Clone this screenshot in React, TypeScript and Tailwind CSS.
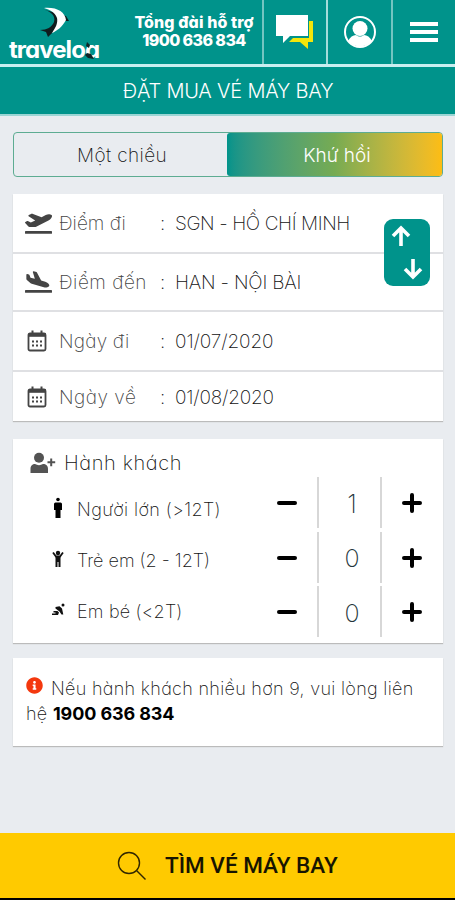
import type { ReactNode } from 'react';
import { FaInfoCircle, FaPlaneArrival, FaPlaneDeparture } from 'react-icons/fa';

function Logo() {
  return (
    <div className="relative h-[64px] w-[126px] shrink-0">
      <svg className="absolute left-[40px] top-[7px] h-[30px] w-[32px]" viewBox="0 0 32 30">
        <path d="M2 2C11 4 16 9 14 15C12 20 7 23 0 23L6 25L8 30L13 25C19 22 23 17 24 14L29 14L26 9Z" fill="#101c1d" />
        <path d="M4 1C17 0 25 5 26 13C22 20 17 24 12 26C16 20 18 16 17 11C15 5 10 3 4 1Z" fill="#fff" />
      </svg>
      <div className="absolute left-[9px] top-[37px] text-[24px] font-bold leading-[26px] tracking-[-0.95px] text-white">
        traveloa
      </div>
      <svg className="absolute left-[83px] top-[41px] h-[19px] w-[18px]" viewBox="0 0 18 19">
        <path d="M4 1L7 4L6 7L3 5ZM4 12L8 13L11 18L5 17L2 14Z" fill="#112526" />
      </svg>
    </div>
  );
}

function ChatIcon() {
  return (
    <svg className="h-[36px] w-[40px]" viewBox="0 0 40 36">
      <path d="M34 7H38V28H33V35L25 28H14L18 24H34Z" fill="#f5e60b" />
      <path d="M1 1H33V22H15L8 29V22H1Z" fill="#fff" />
    </svg>
  );
}

function UserIcon() {
  return (
    <svg className="h-[34px] w-[34px]" viewBox="0 0 34 34">
      <circle cx="17" cy="17" r="15" fill="none" stroke="#fff" strokeWidth="2" />
      <circle cx="17" cy="13.5" r="7.5" fill="#fff" />
      <path d="M5 26C7 22 10 20 13 20C16 22 18 22 21 20C24 20 27 22 29 26C23 33 11 33 5 26Z" fill="#fff" />
    </svg>
  );
}

function CalendarIcon() {
  return (
    <svg className="ml-[2px] h-[22px] w-[20px]" viewBox="0 0 20 22" fill="none" stroke="#444" strokeWidth="1.8">
      <rect x="1.5" y="3.5" width="17" height="17" rx="1.5" />
      <path d="M1.5 5H18.5" strokeWidth="3.6" />
      <path d="M5.5 0.5V5M14.5 0.5V5" strokeWidth="2" />
      <path d="M5 11.5H15M5 15.5H15" strokeWidth="2" strokeDasharray="2 2" />
    </svg>
  );
}

function PassengersIcon() {
  return (
    <svg className="h-[22px] w-[26px]" viewBox="0 0 26 22" fill="#535353">
      <circle cx="9" cy="5.7" r="5" />
      <path d="M0.5 21V17C0.5 13.5 2.5 12 5 12C7.5 13.5 10.5 13.5 13 12C16 12 18 13.5 18 17V21Z" />
      <path d="M20.2 6.5H22.2V9.3H25.2V11.3H22.2V14.2H20.2V11.3H17.5V9.3H20.2Z" />
    </svg>
  );
}

function AdultIcon() {
  return (
    <svg className="h-[22px] w-[14px]" viewBox="0 0 14 22" fill="#000">
      <circle cx="7" cy="2.5" r="1.8" />
      <path d="M4.5 5.5H9.5Q11 5.5 11 7V13H9.5V21H4.5V13H3V7Q3 5.5 4.5 5.5Z" />
    </svg>
  );
}

function ChildIcon() {
  return (
    <svg className="h-[18px] w-[14px]" viewBox="0 0 14 18" fill="none" stroke="#111">
      <circle cx="7" cy="3" r="2.2" fill="#111" stroke="none" />
      <path d="M2 2.5L5 6.5H9L12 2.5" strokeWidth="1.8" />
      <path d="M4.5 6H9.5V17H7.5V12H6.5V17H4.5Z" fill="#111" stroke="none" />
    </svg>
  );
}

function BabyIcon() {
  return (
    <svg className="h-[14px] w-[14px]" viewBox="0 0 14 14" fill="#111">
      <circle cx="12" cy="2" r="1.5" />
      <path d="M4.5 4L8.5 3.2L11 5.5L12.3 11.5L10.5 11.5L8.5 8.5L4.5 5.5Z" />
      <path d="M2.5 8H6.5L8 9.5L7 12H1V10.6H4.5V9.4H2.5Z" />
    </svg>
  );
}

function DetailRow({ icon, label, value, className }: { icon: ReactNode; label: ReactNode; value: ReactNode; className: string }) {
  return (
    <div className={`flex items-center border-[#dfe0e3] pl-3 ${className}`}>
      <div className="flex w-[34px] items-center text-[#444]">{icon}</div>
      <div className="w-[101px] pt-[3px] text-[#444]">{label}</div>
      <div className="w-[15px] pt-[3px]">:</div>
      <div className="whitespace-nowrap pt-[3px]">{value}</div>
    </div>
  );
}

function StepIcon({ plus }: { plus?: boolean }) {
  return (
    <svg className="h-[22px] w-[22px]" viewBox="0 0 22 22" fill="none" stroke="#000" strokeWidth="4" strokeLinecap="round">
      <path d={plus ? 'M3 11H19M11 3V19' : 'M3 11H19'} />
    </svg>
  );
}

function Stepper({ count }: { count: number }) {
  return (
    <div className="flex h-[54.5px] items-start">
      <div className="flex h-[52px] w-[60px] items-center justify-center">
        <StepIcon />
      </div>
      <div className="flex h-[51px] w-[65px] items-center justify-center border-x-2 border-[#d7d7d7] pt-1 pl-[5px] text-[25px] text-[#23343b]">
        {count}
      </div>
      <div className="flex h-[52px] w-[61px] items-center justify-center pr-[2px]">
        <StepIcon plus />
      </div>
    </div>
  );
}

function PassengerLabel({ icon, children }: { icon: ReactNode; children: ReactNode }) {
  return (
    <div className="flex h-[51px] items-center whitespace-nowrap text-[18px]">
      <div className="flex w-[26px] pb-1">{icon}</div>
      {children}
    </div>
  );
}

export default function App() {
  return (
    <div className="flex h-[900px] w-[455px] flex-col overflow-hidden bg-[#e9ecf0] font-['Inter','Noto_Sans',sans-serif] text-[19px] font-extralight text-[#111] [font-feature-settings:'cv11']">
      {/* Header */}
      <header className="flex h-[67px] shrink-0 border-b-[3px] border-[#c9eef0] bg-[#00938b]">
        <Logo />
        <div className="w-[136px] pt-[13px] text-center text-[16px] font-extrabold leading-[19px] text-white">
          <div className="whitespace-nowrap tracking-[0.1px]">Tổng đài hỗ trợ</div>
          <div className="-mt-px tracking-[-0.6px]">1900 636 834</div>
        </div>
        <div className="flex w-[64px] items-center justify-center border-l-2 border-[#74c5c1]">
          <ChatIcon />
        </div>
        <div className="flex w-[65px] items-center justify-center border-l-2 border-[#a4dcda]">
          <UserIcon />
        </div>
        <div className="flex flex-1 flex-col items-center justify-center gap-1 border-l-2 border-[#74c5c1]">
          <div className="h-[4px] w-[28px] bg-white" />
          <div className="h-[4px] w-[28px] bg-white" />
          <div className="h-[4px] w-[28px] bg-white" />
        </div>
      </header>
      <h1 className="flex h-[49px] shrink-0 items-center justify-center border-b-2 border-[#9bd5d4] bg-[#00938b] pl-px text-[20px] font-light tracking-[-0.2px] text-white">
        ĐẶT MUA VÉ MÁY BAY
      </h1>

      <main className="flex flex-1 flex-col px-[13px] pt-4 pr-3">
        {/* Trip type */}
        <div className="flex h-[45px] rounded-[4px] border border-[#5dac92]">
          <button className="flex-1 pt-[3px] pl-[3px] tracking-[0.4px]">Một chiều</button>
          <button className="w-[215px] rounded-[3px] bg-linear-to-r from-[#00938b] via-[#76ab52] to-[#fdbd12] pt-[3px] pl-[5px] font-light text-white">
            Khứ hồi
          </button>
        </div>

        {/* Route and dates */}
        <section className="relative mt-[17px] bg-white shadow-[0_1px_1px_#bbb]">
          <DetailRow className="h-[60px] border-b-2" icon={<FaPlaneDeparture className="h-[22px] w-[27px]" />} label="Điểm đi" value={<span className="tracking-[-0.4px]">SGN - HỒ CHÍ MINH</span>} />
          <DetailRow className="h-[58px] border-b-2" icon={<FaPlaneArrival className="h-[22px] w-[27px]" />} label={<span className="tracking-[0.5px]">Điểm đến</span>} value={<span className="tracking-[-0.2px]">HAN - NỘI BÀI</span>} />
          <DetailRow className="h-[60px] border-b-2" icon={<CalendarIcon />} label={<span className="tracking-[0.2px]">Ngày đi</span>} value={<span className="tracking-[-0.1px]">01/07/2020</span>} />
          <DetailRow className="h-[49px]" icon={<CalendarIcon />} label={<span className="tracking-[0.5px]">Ngày về</span>} value={<span className="tracking-[-0.2px]">01/08/2020</span>} />
          <button className="absolute right-[13px] top-[25px] h-[67px] w-[46px] rounded-[9px] bg-[#00938b]">
            <svg className="h-[67px] w-[46px]" viewBox="0 0 46 67" fill="none" stroke="#fff" strokeWidth="3.6">
              <path d="M17 27V10M9 17L17 9L25 17M29 40V57M21 50L29 58L37 50" />
            </svg>
          </button>
        </section>

        {/* Passengers */}
        <section className="mt-[18px] h-[204px] bg-white shadow-[0_1px_1px_#bbb]">
          <div className="flex h-[38px] items-center gap-2 pl-[17px] pt-[10px] text-[20px]">
            <PassengersIcon />
            <span className="tracking-[0.6px]">Hành khách</span>
          </div>
          <div className="flex justify-between">
            <div className="pl-[38px] pt-[7px]">
              <PassengerLabel icon={<AdultIcon />}>
                <span className="tracking-[0.4px]">Người lớn (&gt;12T)</span>
              </PassengerLabel>
              <PassengerLabel icon={<ChildIcon />}>
                <span>Trẻ em (2 - 12T)</span>
              </PassengerLabel>
              <PassengerLabel icon={<BabyIcon />}>
                <span className="tracking-[0.2px]">Em bé (&lt;2T)</span>
              </PassengerLabel>
            </div>
            <div>
              <Stepper count={1} />
              <Stepper count={0} />
              <Stepper count={0} />
            </div>
          </div>
        </section>

        <section className="mt-[15px] h-[88px] bg-white pl-[13px] pt-[18px] text-[18px] leading-[25px] tracking-[0.3px] shadow-[0_1px_1px_#bbb]">
          <FaInfoCircle className="mr-2 inline h-[17px] w-[17px] -translate-y-[3px] align-[-2px] text-[#f4380e]" />
          Nếu hành khách nhiều hơn 9, vui lòng liên
          <br />
          hệ <b className="font-bold tracking-[-0.1px] text-black">1900 636 834</b>
        </section>
      </main>

      {/* Search */}
      <button className="flex h-[67px] shrink-0 items-center border-b-2 border-black bg-[#ffca00] pl-[117px] font-['Roboto',sans-serif] text-[22.5px] font-medium text-[#171400]">
        <svg className="mr-[18px] h-[30px] w-[30px]" viewBox="0 0 30 30" fill="none" stroke="#302600" strokeWidth="1.4">
          <circle cx="12" cy="12" r="10.5" />
          <path d="M19.5 19.5L28.5 28.5" />
        </svg>
        TÌM VÉ MÁY BAY
      </button>
    </div>
  );
}
